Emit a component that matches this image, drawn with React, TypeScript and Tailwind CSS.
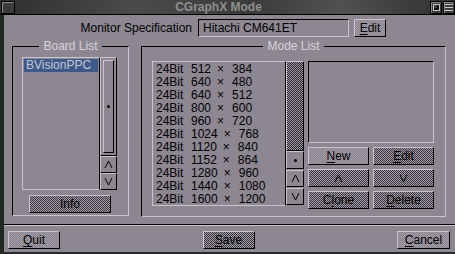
import React from "react";

const modes: [string, string][] = [
  ["512", "384"],
  ["640", "480"],
  ["640", "512"],
  ["800", "600"],
  ["960", "720"],
  ["1024", "768"],
  ["1120", "840"],
  ["1152", "864"],
  ["1280", "960"],
  ["1440", "1080"],
  ["1600", "1200"],
];

function Btn({ children, w, ghost, light }: { children: React.ReactNode; w: string; ghost?: boolean; light?: boolean }) {
  const fill = ghost
    ? "bg-[repeating-conic-gradient(#a29da7_0_25%,#3a363f_0_50%)] bg-[length:2px_2px]"
    : light
    ? "bg-[repeating-conic-gradient(#a39ea8_0_25%,#86818b_0_50%)] bg-[length:2px_2px]"
    : "bg-[#8c8791]";
  return (
    <div
      className={`${w} h-[18px] flex items-center justify-center border border-t-[#c9c4cd] border-l-[#c9c4cd] border-b-black border-r-black text-[12px] text-black leading-none ${fill}`}
    >
      {children}
    </div>
  );
}

function Chevron({ up }: { up?: boolean }) {
  return (
    <svg width="9" height="9" viewBox="0 0 9 9">
      <polyline
        points={up ? "1,8 4.5,1 8,8" : "1,1 4.5,8 8,1"}
        fill="none"
        stroke="#000"
        strokeWidth="1"
      />
    </svg>
  );
}

function ArrowBtn({ up, h }: { up?: boolean; h: string }) {
  return (
    <div className={`${h} w-full flex items-center justify-center border border-t-[#c9c4cd] border-l-[#c9c4cd] border-b-black border-r-black bg-[#8c8791]`}>
      <Chevron up={up} />
    </div>
  );
}

function Grip() {
  return <div className="w-[3px] h-[3px] rounded-full bg-black" />;
}

export default function App() {
  return (
    <div className="w-[455px] h-[254px] flex flex-col bg-[#8c8791] overflow-hidden font-['Liberation_Sans',Arial,sans-serif] text-[12px] text-black">
      {/* Title bar */}
      <div className="h-[15px] flex items-center bg-[linear-gradient(90deg,#2e2f2e,#4a4b4a_30%,#3a3b3a_55%,#505150_75%,#2f302f)] border-b border-black">
        <div className="ml-[1px] w-[14px] h-[13px] border border-black bg-[#3c3c3c] shadow-[inset_1px_1px_0_#8a8a8a]" />
        <div className="flex-1 text-center font-bold text-[12px] text-[#8f8f8f] leading-none pr-[8px]">CGraphX Mode</div>
        <div className="w-[12px] h-[13px] border border-black bg-[#3c3c3c] shadow-[inset_1px_1px_0_#8a8a8a] flex items-center justify-center">
          <div className="w-[7px] h-[7px] border border-[#c8c8c8] shadow-[inset_-2px_-2px_0_#111]" />
        </div>
        <div className="ml-[1px] w-[12px] h-[13px] border border-black bg-[#3c3c3c] shadow-[inset_1px_1px_0_#8a8a8a] flex flex-col items-center justify-center gap-[2px]">
          <div className="w-[8px] h-[1px] bg-[#c8c8c8]" />
          <div className="w-[8px] h-[1px] bg-[#c8c8c8]" />
          <div className="w-[8px] h-[1px] bg-[#c8c8c8]" />
        </div>
      </div>

      {/* Body */}
      <div className="flex-1 flex flex-col border-l-[4px] border-l-[#1f2a22] border-b-2 border-b-[#2a2a2a]">
        {/* Monitor row */}
        <div className="mt-[4px] h-[18px] flex items-center">
          <div className="ml-[62px] w-[126px] text-right">Monitor Specification</div>
          <div className="ml-[6px] w-[151px] h-[18px] flex items-center pl-[4px] border border-t-black border-l-black border-b-[#c9c4cd] border-r-[#c9c4cd]">
            Hitachi CM641ET
          </div>
          <div className="ml-[5px]">
            <Btn w="w-[32px]" light>
              <span className="underline underline-offset-2">E</span>dit
            </Btn>
          </div>
        </div>

        {/* Groups */}
        <div className="mt-[3px] flex">
          {/* Board list */}
          <fieldset className="ml-[8px] w-[117px] h-[176px] border border-t-black border-l-black border-b-[#c9c4cd] border-r-[#c9c4cd]">
            <legend className="mx-auto px-[4px] text-[12px] leading-[13px] text-[#d8d4dc]">Board List</legend>
            <div className="pt-[4px] pl-[9px] flex">
              <div className="w-[78px] h-[133px] p-[1px] border border-t-[#c9c4cd] border-l-[#c9c4cd] border-b-[#c9c4cd] border-r-black">
                <div className="h-[13px] bg-[#3c5a8c] text-[#c6c8cc] leading-[13px] pl-[2px]">BVisionPPC</div>
              </div>
              <div className="w-[17px] h-[133px] flex flex-col">
                <div className="h-[99px] p-[2px] border border-t-[#c9c4cd] border-l-[#c9c4cd] border-b-black border-r-black">
                  <div className="h-full flex items-center justify-center border border-t-[#c9c4cd] border-l-[#c9c4cd] border-b-black border-r-black">
                    <Grip />
                  </div>
                </div>
                <ArrowBtn up h="h-[17px]" />
                <ArrowBtn h="h-[17px]" />
              </div>
            </div>
            <div className="mt-[5px] ml-[16px]">
              <Btn w="w-[82px]" ghost>
                Info
              </Btn>
            </div>
          </fieldset>

          {/* Mode list */}
          <fieldset className="ml-[12px] w-[305px] h-[177px] border border-t-black border-l-black border-b-[#c9c4cd] border-r-[#c9c4cd]">
            <legend className="mx-auto px-[4px] text-[12px] leading-[13px] text-[#d8d4dc]">Mode List</legend>
            <div className="pt-[8px] pl-[10px] flex">
              <div className="w-[134px] h-[145px] pt-[1px] pl-[3px] border border-t-[#c9c4cd] border-l-[#c9c4cd] border-b-[#c9c4cd] border-r-black">
                {modes.map(([w, h], i) => (
                  <div key={i} className="h-[13px] leading-[13px] flex whitespace-pre">
                    <span className="w-[35px]">24Bit</span>
                    <span>{w}</span>
                    <span className="mx-[6px]">×</span>
                    <span className="ml-[2px]">{h}</span>
                  </div>
                ))}
              </div>
              <div className="w-[18px] h-[145px] flex flex-col">
                <div className="h-[90px] bg-[repeating-conic-gradient(#9a95a0_0_25%,#2e2b32_0_50%)] bg-[length:2px_2px] border border-t-[#c9c4cd] border-l-[#c9c4cd] border-b-black border-r-black" />
                <div className="h-[18px] flex items-center justify-center border border-t-[#c9c4cd] border-l-[#c9c4cd] border-b-black border-r-black">
                  <Grip />
                </div>
                <div className="mt-[1px]">
                  <ArrowBtn up h="h-[17px]" />
                </div>
                <div className="mt-[1px]">
                  <ArrowBtn h="h-[17px]" />
                </div>
              </div>
              <div className="ml-[4px] w-[126px] flex flex-col gap-[4px]">
                <div className="h-[82px] border border-t-black border-l-black border-b-[#c9c4cd] border-r-[#c9c4cd]" />
                <div className="flex gap-[4px]">
                  <Btn w="w-[61px]" light>
                    <span className="underline underline-offset-2">N</span>ew
                  </Btn>
                  <Btn w="w-[61px]" ghost>
                    <span className="underline underline-offset-2">E</span>dit
                  </Btn>
                </div>
                <div className="flex gap-[4px]">
                  <Btn w="w-[61px]" ghost>
                    <Chevron up />
                  </Btn>
                  <Btn w="w-[61px]" ghost>
                    <Chevron />
                  </Btn>
                </div>
                <div className="flex gap-[4px]">
                  <Btn w="w-[61px]" ghost>
                    C<span className="underline underline-offset-2">l</span>one
                  </Btn>
                  <Btn w="w-[61px]" ghost>
                    <span className="underline underline-offset-2">D</span>elete
                  </Btn>
                </div>
              </div>
            </div>
          </fieldset>
        </div>

        {/* Separator */}
        <div className="mt-[7px] h-[2px] border-t border-t-black border-b border-b-[#c9c4cd]" />

        {/* Bottom buttons */}
        <div className="mt-[5px] flex justify-between pl-[4px] pr-[5px]">
          <Btn w="w-[52px]" light>
            <span className="underline underline-offset-2">Q</span>uit
          </Btn>
          <Btn w="w-[52px]" ghost>
            <span className="underline underline-offset-2">S</span>ave
          </Btn>
          <Btn w="w-[53px]" light>
            <span className="underline underline-offset-2">C</span>ancel
          </Btn>
        </div>
      </div>
    </div>
  );
}
